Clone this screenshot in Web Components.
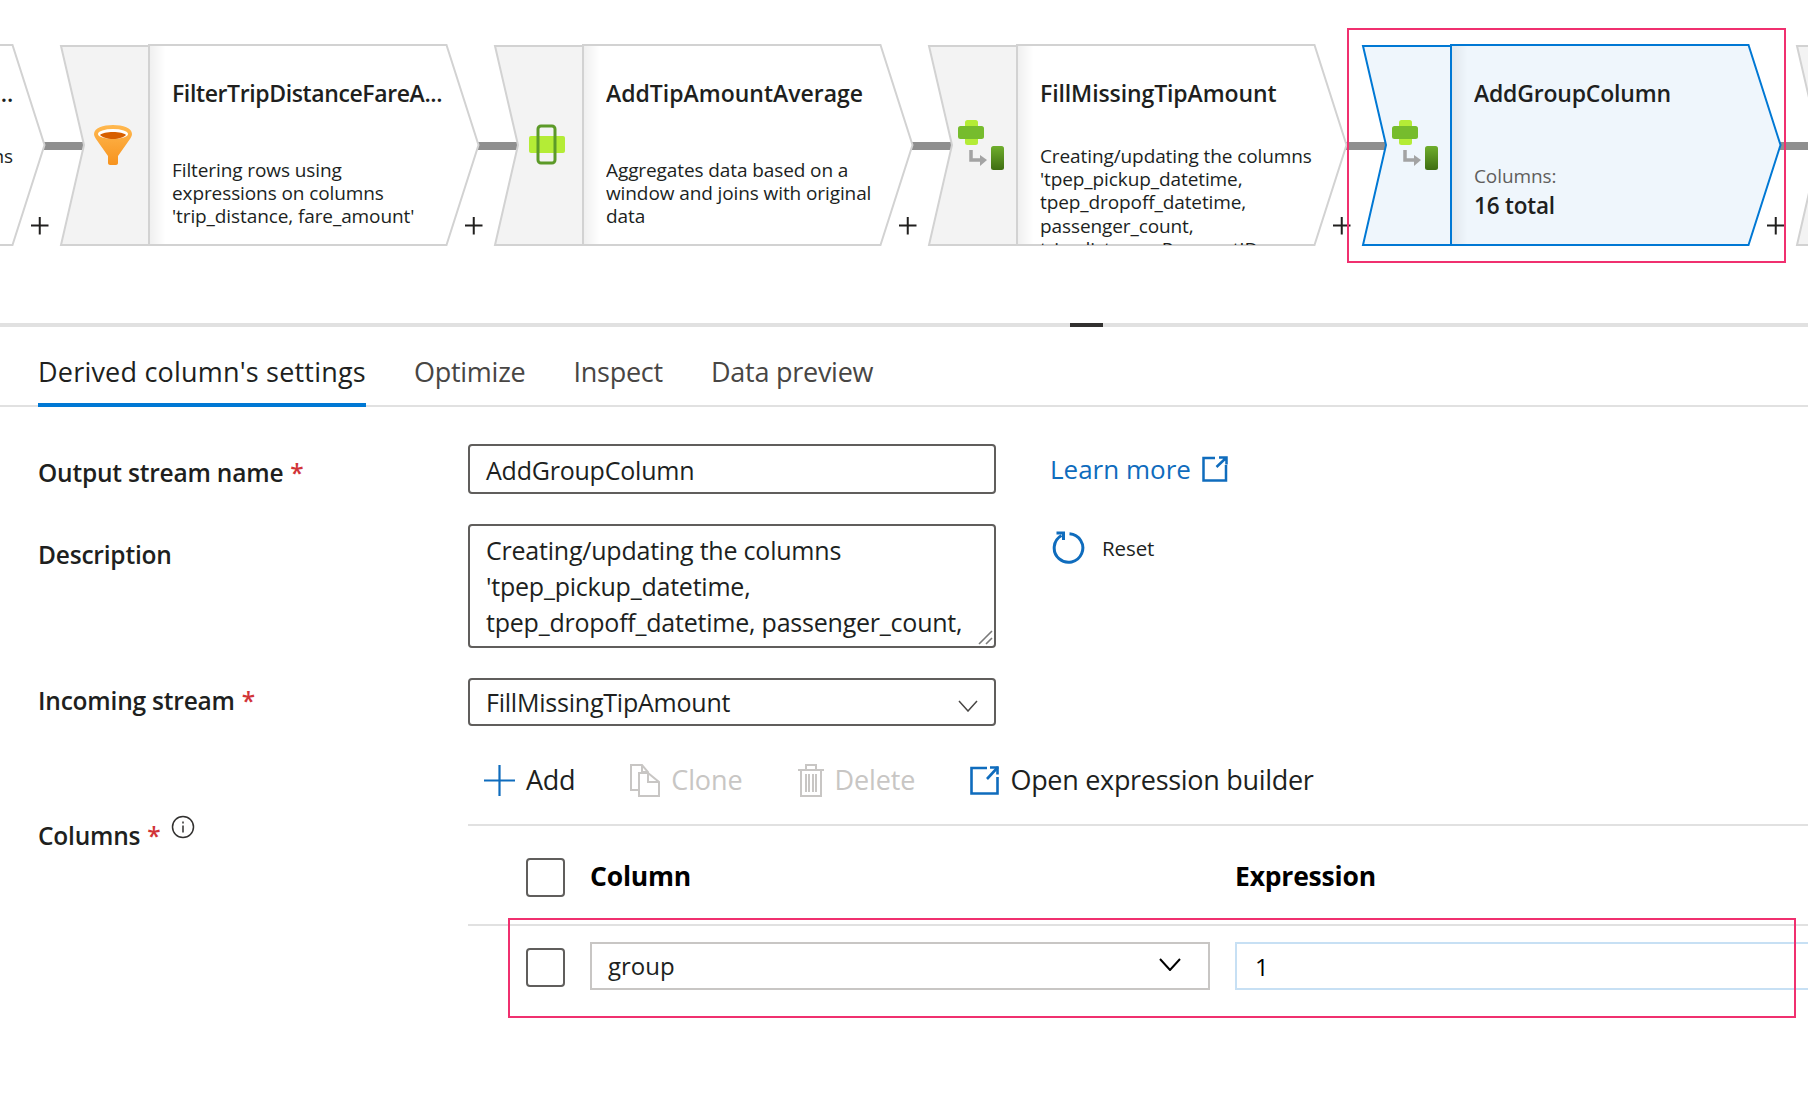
<!doctype html>
<html>
<head>
<meta charset="utf-8">
<style>
  html, body { margin: 0; background: #fff; }
  body { font-family: "Open Sans", "Liberation Sans", sans-serif; color: #201f1e; width: 1808px; height: 1118px; overflow: hidden; position: relative; }
</style>
</head>
<body>
<flow-strip>
  <flow-node style="margin-left:-373px" kind="derive" align="right" gap="37">
    <span slot="name">...</span>ns
  </flow-node>
  <flow-node kind="filter" gap="51">
    <span slot="name" style="letter-spacing:-.38px">FilterTripDistanceFareA...</span>
    Filtering rows using<br>expressions on columns<br>'trip_distance, fare_amount'
  </flow-node>
  <flow-node kind="window" gap="51">
    <span slot="name" style="letter-spacing:0">AddTipAmountAverage</span>
    Aggregates data based on a<br>window and joins with original<br>data
  </flow-node>
  <flow-node kind="derive" gap="37">
    <span slot="name" style="letter-spacing:-.1px">FillMissingTipAmount</span>
    Creating/updating the columns<br>'tpep_pickup_datetime,<br>tpep_dropoff_datetime,<br>passenger_count,<br>trip_distance, PaymentID,
  </flow-node>
  <flow-node kind="derive" selected gap="57">
    <span slot="name">AddGroupColumn</span>
    <span class="cols">Columns:</span>
    <strong slot="total">16 total</strong>
  </flow-node>
  <flow-node kind="empty"></flow-node>
</flow-strip>
<split-bar></split-bar>
<tab-strip>
  <tab-item active>Derived column's settings</tab-item>
  <tab-item>Optimize</tab-item>
  <tab-item>Inspect</tab-item>
  <tab-item>Data preview</tab-item>
</tab-strip>
<settings-form>
  <form-label required slot="l1" style="padding-top:12px">Output stream name</form-label>
  <text-box slot="f1">AddGroupColumn</text-box>
  <learn-link slot="s1">Learn more</learn-link>

  <form-label slot="l2" style="padding-top:14px">Description</form-label>
  <area-box slot="f2">Creating/updating the columns<br>'tpep_pickup_datetime,<br>tpep_dropoff_datetime, passenger_count,</area-box>
  <reset-button slot="s2">Reset</reset-button>

  <form-label required slot="l3" style="padding-top:6px">Incoming stream</form-label>
  <drop-box slot="f3">FillMissingTipAmount</drop-box>

  <form-label required info slot="l4" style="padding-top:63px">Columns</form-label>
  <column-table slot="f4"></column-table>
</settings-form>
<mark-box style="left:1347px;top:28px;width:439px;height:235px"></mark-box>
<mark-box style="left:508px;top:918px;width:1288px;height:100px"></mark-box>

<script>
const icons = {
  filter: `<g transform="translate(33 80)">
      <defs><linearGradient id="fg" x1="0" y1="0" x2="0" y2="1"><stop offset="0" stop-color="#ffb84f"/><stop offset="1" stop-color="#f7931e"/></linearGradient></defs>
      <path d="M0 9C0 3 9 0 19 0s19 3 19 9c0 2-1 3-2 5L24 31v7c0 1-1 2-2 2h-6c-1 0-2-1-2-2v-7L2 14C1 12 0 11 0 9z" fill="url(#fg)"/>
      <ellipse cx="19" cy="9" rx="15" ry="5" fill="#fff"/>
      <path d="M6 10c2-2 7-3 13-3s11 1 13 3c-2 2-7 4-13 4S8 12 6 10z" fill="#d75f00"/>
    </g>`,
  window: `<g transform="translate(34 80)">
      <rect x="0" y="11" width="36" height="17" rx="2" fill="#b4ec36"/>
      <rect x="9" y="1" width="17" height="37" rx="3" fill="none" stroke="#5c9a28" stroke-width="3"/>
    </g>`,
  derive: `<g transform="translate(29 75)">
      <defs><linearGradient id="dg" x1="0" y1="0" x2="0" y2="1"><stop offset="0" stop-color="#6fae2c"/><stop offset="1" stop-color="#3f6e12"/></linearGradient></defs>
      <rect x="7" y="0" width="13" height="25" rx="2.5" fill="#b4ec36"/>
      <rect x="0" y="6" width="26" height="13" rx="2.5" fill="#76bc2d"/>
      <path d="M13 30v10h10" fill="none" stroke="#a3a3a3" stroke-width="3.5"/>
      <path d="M22 35l7 5-7 6z" fill="#a3a3a3"/>
      <rect x="33" y="26" width="13" height="24" rx="2.5" fill="url(#dg)"/>
    </g>`,
  empty: ''
}

const nodeHtml = `
<style>
  :host { display: block; flex: none; width: 434px; height: 202px; position: relative; }
  svg { position: absolute; left: 0; top: 0; overflow: visible; }
  .main { position: relative; box-sizing: border-box; height: 200px; margin-left: 111px; width: 300px; padding-top: 33px; overflow: hidden; }
  .name { font-size: 23px; line-height: 30px; font-weight: 600; color: #201f1e; white-space: nowrap; letter-spacing: -.2px; }
  .text { font-size: 19px; line-height: 23.200px; color: #201f1e; white-space: nowrap; letter-spacing: -.1px; }
  :host([align=right]) .main { text-align: right; width: 275px; }
  ::slotted(strong) { display: block; font-size: 22.500px; line-height: 32px; font-weight: 600; margin-top: 2px; letter-spacing: -.2px; }
  ::slotted(.cols) { color: #605e5c; }
</style>
<svg width="434" height="202" viewBox="0 0 434 202">
  <rect class="link" x="417" y="97" width="41" height="8" fill="#8f8f8f"/>
  <polygon class="head" points="0,1 88,1 88,200 0,200 23,100"/>
  <polygon class="body" points="88,0 385.500,0 417.500,100 385.500,200 88,200"/>
  <defs><linearGradient id="sh"><stop offset="0" stop-color="#000" stop-opacity=".06"/><stop offset="1" stop-color="#000" stop-opacity="0"/></linearGradient></defs>
  <rect x="89" y="1" width="16" height="198" fill="url(#sh)"/>
  <g class="icon"></g>
  <path class="plus" d="M404 180.500h17.500M412.750 172v17.500" stroke="#201f1e" stroke-width="2" fill="none"/>
</svg>
<div class="main">
  <div class="name"><slot name="name"></slot></div>
  <div class="text"><slot></slot><slot name="total"></slot></div>
</div>`

customElements.define('flow-node', class extends HTMLElement {
  constructor () {
    super()
    this.attachShadow({ mode: 'open' })
    this.shadowRoot.innerHTML = nodeHtml
  }

  connectedCallback () {
    const root = this.shadowRoot
    const kind = this.getAttribute('kind')
    const on = this.hasAttribute('selected')
    root.querySelector('.icon').innerHTML = icons[kind]
    for (const el of root.querySelectorAll('.head, .body')) {
      el.setAttribute('fill', on ? '#eff6fc' : el.classList.contains('head') ? '#f3f3f3' : '#fff')
      el.setAttribute('stroke', on ? '#0078d4' : '#d2d2d2')
      el.setAttribute('stroke-width', '2')
    }
    if (kind === 'empty') {
      root.querySelector('.plus').remove()
      root.querySelector('.main').remove()
      return
    }
    root.querySelector('.text').style.marginTop = `${this.getAttribute('gap')}px`
  }
})

customElements.define('flow-strip', class extends HTMLElement {
  constructor () {
    super()
    this.attachShadow({ mode: 'open' }).innerHTML = `
      <style>:host { display: flex; box-sizing: border-box; height: 323px; padding: 45px 0 0 0; overflow: hidden; }</style>
      <slot></slot>`
  }
})

customElements.define('split-bar', class extends HTMLElement {
  constructor () {
    super()
    this.attachShadow({ mode: 'open' }).innerHTML = `
      <style>
        :host { display: block; height: 4px; background: #e1e1e1; padding-left: 1070px; box-sizing: border-box; }
        div { width: 33px; height: 4px; background: #323130; }
      </style>
      <div></div>`
  }
})

customElements.define('tab-strip', class extends HTMLElement {
  constructor () {
    super()
    this.attachShadow({ mode: 'open' }).innerHTML = `
      <style>:host { display: flex; gap: 48px; height: 80px; padding-left: 38px; box-sizing: border-box; border-bottom: 2px solid #e1e1e1; }</style>
      <slot></slot>`
  }
})

customElements.define('tab-item', class extends HTMLElement {
  constructor () {
    super()
    this.attachShadow({ mode: 'open' }).innerHTML = `
      <style>
        :host { display: block; height: 80px; box-sizing: border-box; font-size: 27px; line-height: 90px; color: #484644; white-space: nowrap; letter-spacing: -.25px; }
        :host([active]) { color: #201f1e; border-bottom: 4px solid #0078d4; letter-spacing: .2px; }
      </style>
      <slot></slot>`
  }
})

customElements.define('settings-form', class extends HTMLElement {
  constructor () {
    super()
    this.attachShadow({ mode: 'open' }).innerHTML = `
      <style>
        :host { display: grid; grid-template-columns: 468px 528px 1fr; grid-template-rows: 50px 124px 48px auto; row-gap: 30px; padding-top: 37px; }
        .wide { grid-column: 2 / 4; margin-top: -32px; }
        .side { padding-left: 54px; }
      </style>
      <slot name="l1"></slot><slot name="f1"></slot><div class="side"><slot name="s1"></slot></div>
      <slot name="l2"></slot><slot name="f2"></slot><div class="side"><slot name="s2"></slot></div>
      <slot name="l3"></slot><slot name="f3"></slot><div></div>
      <slot name="l4"></slot><div class="wide"><slot name="f4"></slot></div>`
  }
})

customElements.define('form-label', class extends HTMLElement {
  constructor () {
    super()
    this.attachShadow({ mode: 'open' })
    const star = this.hasAttribute('required') ? '<span class="star">*</span>' : ''
    const info = this.hasAttribute('info')
      ? '<svg width="24" height="24" viewBox="0 0 24 24"><circle cx="12" cy="12" r="10.500" fill="none" stroke="#323130" stroke-width="1.500"/><path d="M12 10.500v7M12 6.500v2" stroke="#323130" stroke-width="1.500"/></svg>'
      : ''
    this.shadowRoot.innerHTML = `
      <style>
        :host { display: block; padding-left: 38px; font-size: 24.500px; line-height: 34px; font-weight: 600; color: #201f1e; white-space: nowrap; letter-spacing: -.2px; }
        .star { color: #d13438; margin-left: 7px; }
        svg { position: relative; top: -6px; left: 10px; }
      </style>
      <slot></slot>${star}${info}`
  }
})

const boxCss = `
  :host { display: block; box-sizing: border-box; border: 2px solid #605e5c; border-radius: 4px; background: #fff; padding-left: 16px; font-size: 25px; color: #201f1e; white-space: nowrap; letter-spacing: -.22px; position: relative; }`

customElements.define('text-box', class extends HTMLElement {
  constructor () {
    super()
    this.attachShadow({ mode: 'open' }).innerHTML = `
      <style>${boxCss} :host { line-height: 49px; }</style>
      <slot></slot>`
  }
})

customElements.define('area-box', class extends HTMLElement {
  constructor () {
    super()
    this.attachShadow({ mode: 'open' }).innerHTML = `
      <style>${boxCss}
        :host { line-height: 36px; padding-top: 6px; overflow: hidden; }
        svg { position: absolute; right: 1px; bottom: 1px; }
      </style>
      <slot></slot>
      <svg width="16" height="16" viewBox="0 0 16 16"><path d="M2 15L15 2M9 15l6-6" stroke="#7a7a7a" stroke-width="1.600" fill="none"/></svg>`
  }
})

const chevron = (w, h, c, s) => `<svg width="${w}" height="${h}" viewBox="0 0 ${w} ${h}"><path d="M1 1L${w / 2} ${h - 1}L${w - 1} 1" fill="none" stroke="${c}" stroke-width="${s}"/></svg>`

customElements.define('drop-box', class extends HTMLElement {
  constructor () {
    super()
    this.attachShadow({ mode: 'open' }).innerHTML = `
      <style>${boxCss}
        :host { line-height: 47px; display: flex; justify-content: space-between; align-items: center; padding-right: 16px; }
        svg { margin-top: 8px; }
      </style>
      <slot></slot>${chevron(20, 12, '#484644', 1.5)}`
  }
})

customElements.define('learn-link', class extends HTMLElement {
  constructor () {
    super()
    this.attachShadow({ mode: 'open' }).innerHTML = `
      <style>
        :host { display: flex; align-items: center; gap: 11px; height: 50px; font-size: 26px; color: #0f6cbd; white-space: nowrap; }
      </style>
      <slot></slot>
      <svg width="26" height="26" viewBox="0 0 26 26" fill="none" stroke="#0f6cbd" stroke-width="2.500"><path d="M13 2H1.500v22.500H24V9"/><path d="M24.500 1.500L14.500 11M17 1.500H24.500V8.500"/></svg>`
  }
})

customElements.define('reset-button', class extends HTMLElement {
  constructor () {
    super()
    this.attachShadow({ mode: 'open' }).innerHTML = `
      <style>
        :host { display: flex; align-items: center; gap: 17px; height: 34px; margin-top: 7px; font-size: 20.500px; color: #201f1e; white-space: nowrap; letter-spacing: -.1px; }
        svg { margin-left: 2px; }
      </style>
      <svg width="33" height="34" viewBox="0 0 33 34" fill="none" stroke="#0f6cbd" stroke-width="3"><path d="M17.500 2.700A14.300 14.300 0 1 1 9.500 4.500"/><path d="M4.500 2H11.500V9"/></svg>
      <slot></slot>`
  }
})

customElements.define('tool-item', class extends HTMLElement {
  constructor () {
    super()
    this.attachShadow({ mode: 'open' }).innerHTML = `
      <style>
        :host { display: flex; align-items: center; gap: 11px; font-size: 27px; line-height: 34px; color: #201f1e; white-space: nowrap; letter-spacing: -.3px; }
        :host([disabled]) { color: #c8c6c4; letter-spacing: -.1px; }
        ::slotted(svg) { flex: none; }
      </style>
      <slot name="icon"></slot><slot></slot>`
  }
})

customElements.define('column-table', class extends HTMLElement {
  constructor () {
    super()
    this.attachShadow({ mode: 'open' }).innerHTML = `
      <style>
        :host { display: block; overflow: hidden; }
        .bar { display: flex; align-items: center; gap: 55px; height: 100px; padding: 12px 0 0 16px; box-sizing: border-box; }
        .row { display: grid; grid-template-columns: 39px 620px 1fr; column-gap: 25px; padding-left: 58px; border-top: 2px solid #e1e1e1; align-items: center; }
        .top { height: 98px; }
        .top .check { margin-top: 4px; }
        .head { font-size: 26.500px; font-weight: 700; color: #000; letter-spacing: -.2px; margin-top: 2px; }
        .check { width: 39px; height: 39px; box-sizing: border-box; border: 2px solid #605e5c; border-radius: 4px; }
        .cell { box-sizing: border-box; height: 48px; border: 2px solid #c8c6c4; font-size: 24px; line-height: 41px; padding: 0 27px 0 16px; display: flex; justify-content: space-between; align-items: center; color: #201f1e; }
        .cell span { margin-top: -2px; }
        .cell svg { margin-top: -3px; }
        .expr { border-color: #c7e0f4; margin-right: -20px; padding-left: 18px; color: #000; }
        .last { height: 64px; padding-top: 16px; align-items: start; }
        .last .check { margin-top: 6px; }
      </style>
      <div class="bar">
        <tool-item><svg slot="icon" width="31" height="31" viewBox="0 0 31 31"><path d="M0 15.500h31M15.500 0v31" stroke="#0f6cbd" stroke-width="2.200"/></svg>Add</tool-item>
        <tool-item disabled><svg slot="icon" width="30" height="33" viewBox="0 0 30 33" fill="none" stroke="#c8c6c4" stroke-width="2"><path d="M9 26H1V1h11l6 7v5"/><path d="M12 1v7h6"/><path d="M9 9h9l11 9v14H9z"/><path d="M18 9v9h11"/></svg>Clone</tool-item>
        <tool-item disabled><svg slot="icon" width="26" height="33" viewBox="0 0 26 33" fill="none" stroke="#c8c6c4" stroke-width="2"><path d="M0 6h26M8 6V1h10v5M3 6v26h20V6M8 10v18M11 10v18M15 10v18M18 10v18"/></svg>Delete</tool-item>
        <tool-item><svg slot="icon" width="29" height="29" viewBox="0 0 29 29" fill="none" stroke="#0f6cbd" stroke-width="2.600"><path d="M17 2H1.500v25.500H27.500V11"/><path d="M28 1L17 13"/><path d="M20 1.500h7.500v7"/></svg>Open expression builder</tool-item>
      </div>
      <div class="row top">
        <div class="check"></div>
        <div class="head">Column</div>
        <div class="head">Expression</div>
      </div>
      <div class="row last">
        <div class="check"></div>
        <div class="cell"><span>group</span>${chevron(22, 13, '#000', 2)}</div>
        <div class="cell expr">1</div>
      </div>`
  }
})

customElements.define('mark-box', class extends HTMLElement {
  constructor () {
    super()
    this.attachShadow({ mode: 'open' }).innerHTML = `
      <style>:host { display: block; position: absolute; box-sizing: border-box; border: 2px solid #f0306f; pointer-events: none; }</style>`
  }
})
</script>
</body>
</html>
